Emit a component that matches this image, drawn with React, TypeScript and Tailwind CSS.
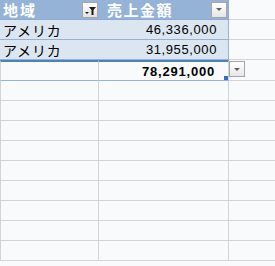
import React from "react";

const jp = { fontFamily: '"Noto Sans CJK JP", "Noto Sans", sans-serif' };
const num = { fontFamily: '"Liberation Sans", Arial, sans-serif' };

function DropBtn({ className = "" }: { className?: string }) {
  return (
    <div
      className={
        "w-[16px] h-[16px] border border-[#a6a6a6] bg-gradient-to-b from-[#ffffff] to-[#e6e6e6] flex items-center justify-center " +
        className
      }
    >
      <svg width="8" height="5" viewBox="0 0 8 5">
        <path d="M1 1 L7 1 L4 4 Z" fill="#606060" />
      </svg>
    </div>
  );
}

function FilterBtn() {
  return (
    <div className="w-[16px] h-[16px] border border-[#a6a6a6] bg-gradient-to-b from-[#ffffff] to-[#e2e2e2] relative">
      <svg width="14" height="14" viewBox="0 0 14 14" className="absolute left-0 top-0">
        <path d="M6 4 L13 4 L10.5 7 L10.5 12 L8.5 12 L8.5 7 Z" fill="#1a1a1a" />
        <path d="M2 9 L6 9 L4 11 Z" fill="#1a1a1a" />
      </svg>
    </div>
  );
}

export default function App() {
  const blanks = Array.from({ length: 9 });
  return (
    <div className="w-[275px] h-[266px] overflow-hidden bg-[#f9fafc]">
      {/* header */}
      <div className="flex h-[20px]">
        <div className="w-[99px] h-[20px] bg-[#95b3d7] border-b border-[#8eaad4] flex items-center pl-[3px] pr-[1px] justify-between">
          <span className="text-white font-bold text-[15px] leading-none tracking-[2px]" style={jp}>
            地域
          </span>
          <FilterBtn />
        </div>
        <div className="w-[130px] h-[20px] bg-[#95b3d7] border-b border-r border-[#8eaad4] flex items-center pl-[8px] pr-[1px] justify-between">
          <span className="text-white font-bold text-[15px] leading-none tracking-[1.5px]" style={jp}>
            売上金額
          </span>
          <DropBtn />
        </div>
        <div className="w-[46px] h-[20px] border-b border-[#d4d4d4]" />
      </div>
      {/* data rows */}
      {[
        ["アメリカ", "46,336,000"],
        ["アメリカ", "31,955,000"],
      ].map(([a, b], i) => (
        <div key={i} className="flex h-[20px]">
          <div className="w-[99px] h-[20px] bg-[#dce6f1] border-b border-[#95b3d7] flex items-center pl-[3px]">
            <span className="text-black text-[14px] leading-none tracking-[0.8px]" style={jp}>
              {a}
            </span>
          </div>
          <div className="w-[130px] h-[20px] bg-[#dce6f1] border-b border-r border-[#95b3d7] flex items-center justify-end pr-[11px]">
            <span className="text-black text-[13px] leading-none tracking-[0.6px]" style={num}>
              {b}
            </span>
          </div>
          <div className="w-[46px] h-[20px] border-b border-[#d4d4d4]" />
        </div>
      ))}
      {/* total row */}
      <div className="flex h-[21px]">
        <div className="w-[99px] h-[21px] border-t-2 border-t-[#4f81bd] border-b border-b-[#95b3d7] border-l border-l-[#d4d4d4] border-r border-r-[#d4d4d4]" />
        <div className="w-[130px] h-[21px] border-t-2 border-t-[#4f81bd] border-b border-b-[#95b3d7] border-r border-r-[#d4d4d4] flex items-center justify-end pr-[13px] relative">
          <span className="text-black font-bold text-[13px] leading-none tracking-[0.8px]" style={num}>
            78,291,000
          </span>
          <div className="absolute right-0 bottom-0 w-[4px] h-[4px] bg-[#3b6cc4]" />
        </div>
        <div className="w-[46px] h-[21px] border-b border-[#d4d4d4] pt-[1px]">
          <DropBtn />
        </div>
      </div>
      {/* blank rows */}
      {blanks.map((_, i) => (
        <div key={i} className="flex h-[20px]">
          <div className="w-[99px] h-[20px] border-b border-l border-r border-[#d4d4d4]" />
          <div className="w-[130px] h-[20px] border-b border-r border-[#d4d4d4]" />
          <div className="w-[46px] h-[20px] border-b border-[#d4d4d4]" />
        </div>
      ))}
    </div>
  );
}
